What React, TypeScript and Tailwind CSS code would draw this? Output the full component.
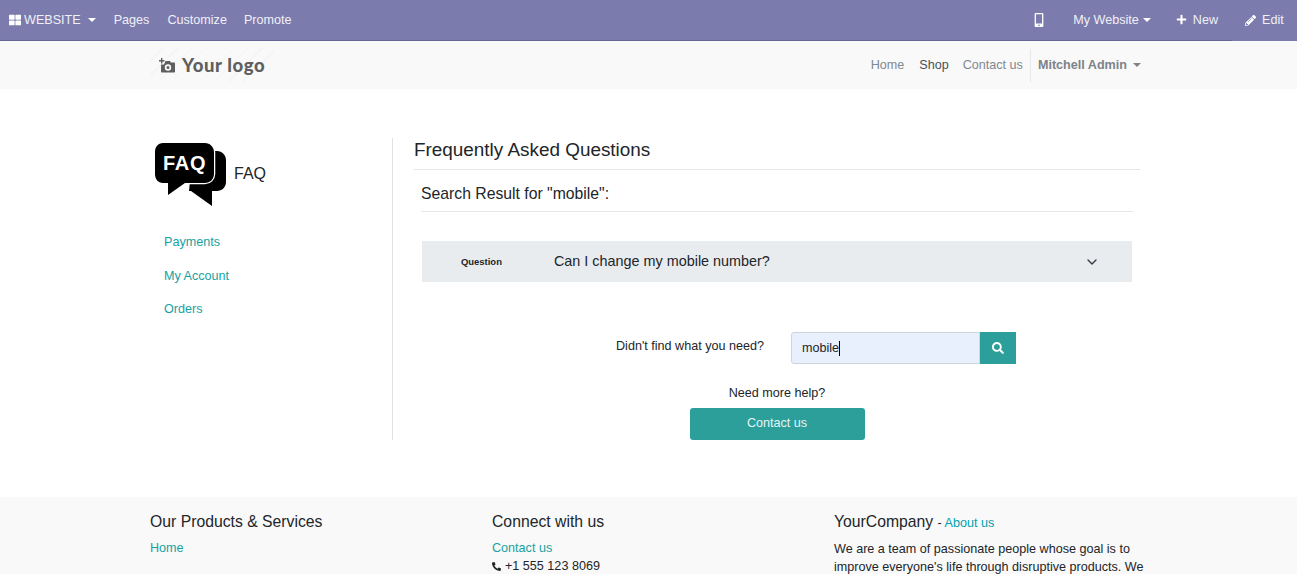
import { ChevronDown } from "lucide-react";
import { FaMobileAlt, FaPencilAlt, FaPhoneAlt, FaPlus, FaSearch, FaThLarge } from "react-icons/fa";

function Caret({ className }: { className: string }) {
  return <span className={`inline-block border-x-[4px] border-t-[4px] border-x-transparent ${className}`}></span>;
}

function FaqLogo() {
  return (
    <svg width="71" height="64" viewBox="0 0 71 64">
      <path d="M38 8 H62 C67 8 71 12 71 17 V39 C71 44 67 48 62 48 H57 V63 L36 48 H34 Z" fill="#000" />
      <path
        d="M8 0 H50 C55 0 59 4 59 9 V31 C59 36 55 40 50 40 H30 L13 52 V40 H8 C3 40 0 36 0 31 V9 C0 4 3 0 8 0 Z"
        fill="#000"
        stroke="#fff"
        strokeWidth="2.5"
        paintOrder="stroke"
      />
      <text x="8" y="27" fontFamily="Liberation Sans, sans-serif" fontWeight="700" fontSize="20" letterSpacing="0.7" fill="#fff">
        FAQ
      </text>
    </svg>
  );
}

function CameraPlus() {
  return (
    <svg width="16" height="15" viewBox="0 0 16 15" fill="#5f5f5f">
      <path d="M2 0 H3.4 V2 H5.4 V3.4 H3.4 V5.4 H2 V3.4 H0 V2 H2 Z" />
      <path
        fillRule="evenodd"
        d="M6.5 3 H11 L12 4.5 H15 C15.6 4.5 16 4.9 16 5.5 V13.5 C16 14.1 15.6 14.5 15 14.5 H3 C2.4 14.5 2 14.1 2 13.5 V6.5 H5 Z M9 6.3 A3.2 3.2 0 1 0 9 12.7 A3.2 3.2 0 1 0 9 6.3 Z M9 8 A1.5 1.5 0 1 1 9 11 A1.5 1.5 0 1 1 9 8 Z"
      />
    </svg>
  );
}

export default function App() {
  const sideLinks = ["Payments", "My Account", "Orders"];

  return (
    <div className="h-[574px] overflow-hidden bg-white font-['Liberation_Sans',sans-serif] text-[12.6px] text-[#212529]">
      <div className="flex h-[41px] bg-[#7c7bad] text-[#f0f0f7]">
        <div className="flex h-full flex-1 items-center justify-between border-b border-[#656692] pl-[9px] pr-[14px]">
          <div className="flex items-center">
            <FaThLarge className="mr-[3px] text-[12px] text-white" />
            <span>WEBSITE</span>
            <Caret className="ml-[7px] border-t-white" />
            <span className="ml-[18px]">Pages</span>
            <span className="ml-[18px]">Customize</span>
            <span className="ml-[17px]">Promote</span>
          </div>
          <div className="flex items-center">
            <FaMobileAlt className="text-[14px] text-white" />
            <span className="ml-[27px]">My Website</span>
            <Caret className="ml-[4px] border-t-white" />
            <FaPlus className="ml-[25px] text-[11px] text-white" />
            <span className="ml-[6px]">New</span>
          </div>
        </div>
        <div className="flex h-full w-[65px] items-center pb-px pl-[13px]">
          <FaPencilAlt className="text-[11px] text-white" />
          <span className="ml-[6px]">Edit</span>
        </div>
      </div>

      <div className="flex h-[48px] items-center justify-between bg-[#f9f9f9] pl-[150px] pr-[156px]">
        <div className="flex h-[34px] w-[124px] items-center gap-[7px] bg-[repeating-linear-gradient(135deg,#f9f9f9_0px,#f9f9f9_9px,#f4f4f4_9px,#f4f4f4_10px)] pl-[9px] text-[#5f5f5f]">
          <CameraPlus />
          <span className="pt-px font-['Lato',sans-serif] text-[18.5px] font-black tracking-[0.6px]">Your logo</span>
        </div>
        <div className="flex h-full items-center">
          <span className="text-[#808890]">Home</span>
          <span className="ml-[15px] text-[#495057]">Shop</span>
          <span className="ml-[14px] text-[#808890]">Contact us</span>
          <div className="ml-[7px] flex h-[33px] items-center border-l border-[#e6e9ec] pl-[7px] font-bold text-[#7d838a]">
            Mitchell Admin
            <Caret className="ml-[6px] border-t-[#7d838a]" />
          </div>
        </div>
      </div>

      <div className="flex pl-[150px] pr-[157px] pt-[49px]">
        <div className="w-[243px] border-r border-[#dee2e6]">
          <div className="flex items-center gap-[8px] pl-[5px] pt-[5px]">
            <FaqLogo />
            <span className="mb-[2px] text-[16px]">FAQ</span>
          </div>
          <div className="mt-[27px] flex flex-col gap-[17px] pl-[14px] leading-[16.5px] text-[#17a2a2]">
            {sideLinks.map((link) => (
              <span key={link}>{link}</span>
            ))}
          </div>
        </div>

        <div className="ml-[21px] h-[302px] w-[726px]">
          <div className="border-b border-[#e6e6e6] pb-[7px] text-[18.9px] leading-[24px]">Frequently Asked Questions</div>
          <div className="mx-[7px] mt-[14px] border-b border-[#e6e6e6] pb-[7px] text-[15.75px] leading-[20px]">
            Search Result for "mobile":
          </div>
          <div className="mx-[8px] mt-[29px] flex h-[41px] items-center bg-[#e9ecef] pr-[32px]">
            <span className="ml-[39px] pt-px text-[9.45px] font-bold">Question</span>
            <span className="ml-[52px] text-[14.4px]">Can I change my mobile number?</span>
            <ChevronDown className="ml-auto h-[16px] w-[16px] text-[#343a40]" />
          </div>

          <div className="mt-[50px] flex items-center pl-[202px]">
            <span className="mb-[4px] w-[149px]">Didn't find what you need?</span>
            <div className="ml-[26px] flex h-[32px] w-[189px] items-center rounded-l-[3px] border border-[#ced4da] bg-[#e8f0fe] pl-[10px]">
              mobile<span className="h-[15px] w-px bg-black"></span>
            </div>
            <div className="flex h-[32px] w-[36px] items-center justify-center bg-[#2c9f9b]">
              <FaSearch className="text-[12px] text-white" />
            </div>
          </div>

          <div className="mt-[21px] flex flex-col items-center">
            <span className="leading-[16px]">Need more help?</span>
            <div className="mt-[7px] flex h-[32px] w-[175px] items-center justify-center rounded-[3px] bg-[#2c9f9b] pb-[2px] text-[#e6f5f4]">
              Contact us
            </div>
          </div>
        </div>
      </div>

      <div className="mt-[57px] h-[80px] bg-[#f9f9f9] pl-[150px] pt-[15px]">
        <div className="grid w-[1026px] grid-cols-3 leading-[18px]">
          <div>
            <div className="text-[15.75px] leading-[20px]">Our Products &amp; Services</div>
            <div className="mt-[7px] text-[#17a2a2]">Home</div>
          </div>
          <div>
            <div className="text-[15.75px] leading-[20px]">Connect with us</div>
            <div className="mt-[7px] text-[#17a2a2]">Contact us</div>
            <div className="flex items-center gap-[4px]">
              <FaPhoneAlt className="text-[9px]" />
              +1 555 123 8069
            </div>
          </div>
          <div>
            <div className="text-[15.75px] leading-[20px]">
              YourCompany <span className="text-[12.6px]">- </span>
              <span className="text-[12.6px] text-[#00a0b0]">About us</span>
            </div>
            <div className="mt-[7px] w-[312px]">
              We are a team of passionate people whose goal is to improve everyone's life through disruptive products. We build great products to solve your business problems.
            </div>
          </div>
        </div>
      </div>
    </div>
  );
}
